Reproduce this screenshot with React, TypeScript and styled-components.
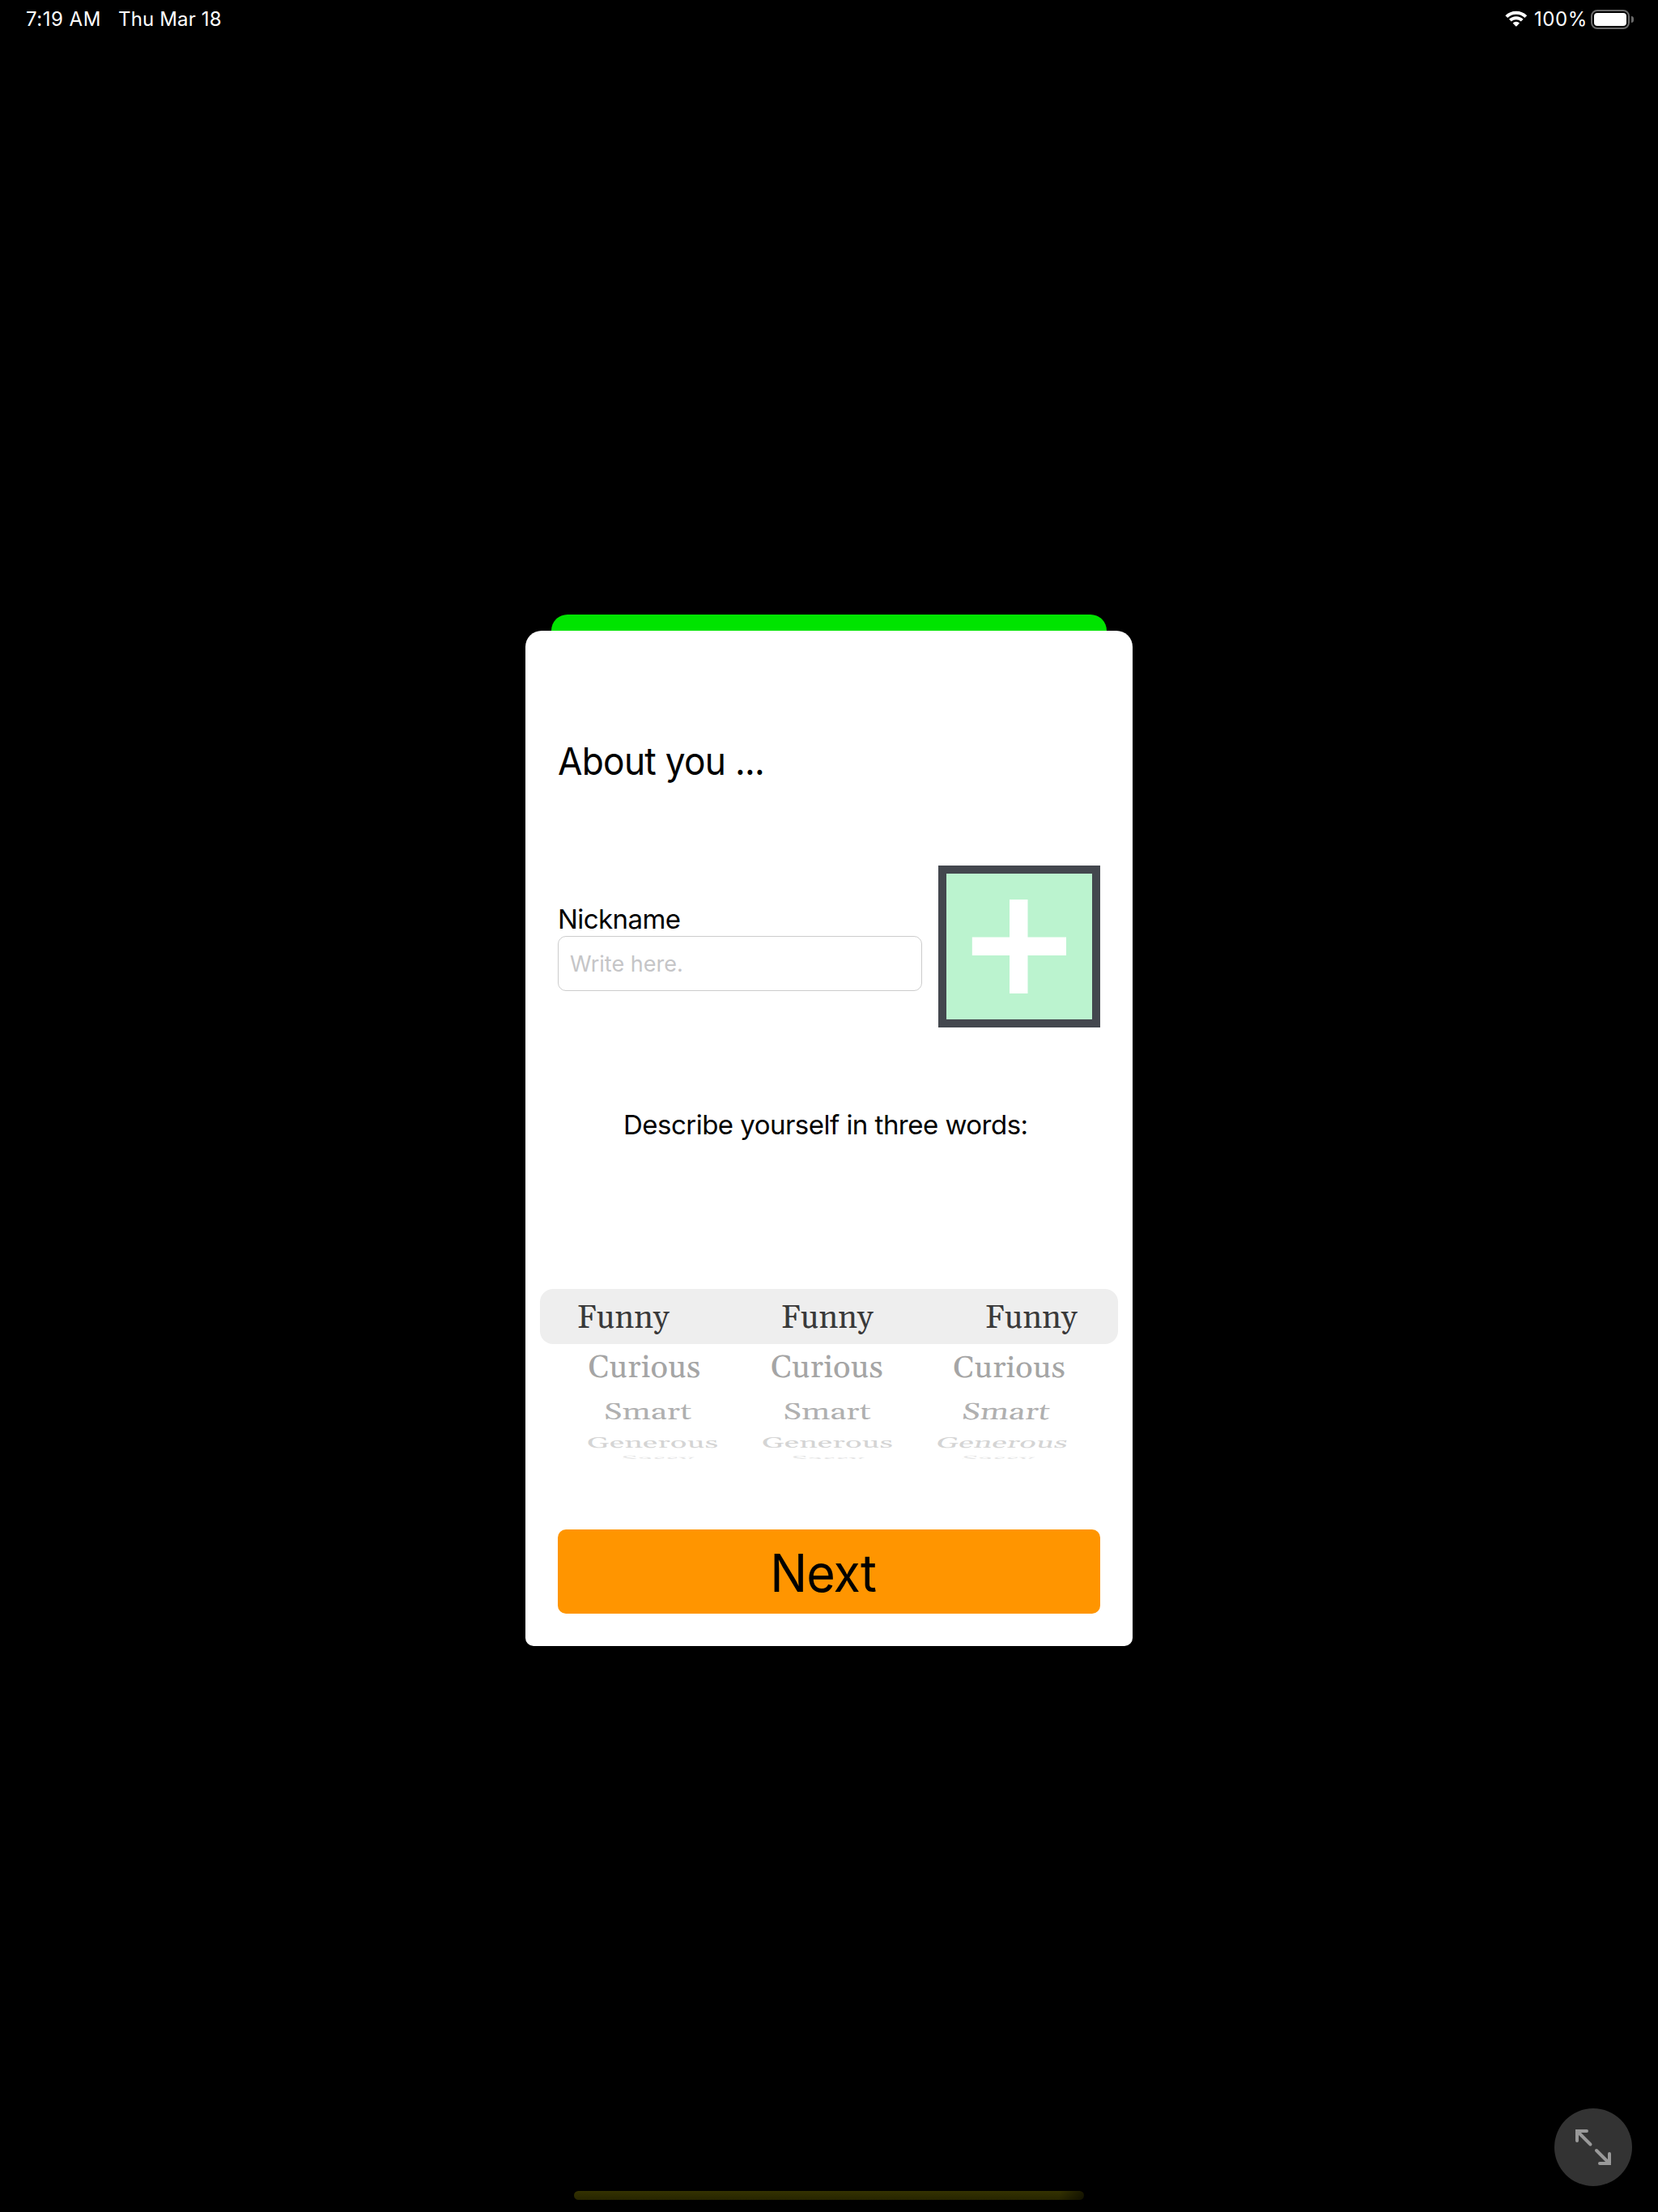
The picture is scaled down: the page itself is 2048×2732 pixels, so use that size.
import React from "react";
import styled, { createGlobalStyle } from "styled-components";

const GlobalStyle = createGlobalStyle`
  html, body, #root { margin: 0; padding: 0; background: #000; }
  * { box-sizing: border-box; }
`;

const Screen = styled.div`
  position: relative;
  display: flex;
  flex-direction: column;
  align-items: center;
  width: 2048px;
  height: 2732px;
  overflow: hidden;
  background: #000;
  color: #000;
  font-family: Inter, "Liberation Sans", sans-serif;
  white-space: nowrap;
`;

const StatusBar = styled.header`
  display: flex;
  align-items: center;
  align-self: stretch;
  height: 47px;
  padding: 0 30px 0 32px;
  color: #fff;
  font-size: 24px;
  line-height: 47px;
`;

const Clock = styled.span`
  width: 114px;
  letter-spacing: 0.5px;
`;

const DateLabel = styled.span`
  letter-spacing: 0.15px;
`;

const StatusIcons = styled.div`
  display: flex;
  align-items: center;
  margin-left: auto;
`;

const WifiIcon = styled.svg`
  width: 28px;
  height: 21px;
  margin-right: 8px;
`;

const BatteryLevel = styled.span`
  letter-spacing: 0.6px;
  margin-right: 4px;
`;

const BatteryBody = styled.div`
  width: 48px;
  height: 24px;
  padding: 2px;
  border: 2px solid #6a6a6a;
  border-radius: 8px;
`;

const BatteryFill = styled.div`
  height: 100%;
  border-radius: 4px;
  background: #fff;
`;

const BatteryNub = styled.div`
  width: 3px;
  height: 8px;
  margin-left: 2px;
  border-radius: 0 4px 4px 0;
  background: #6a6a6a;
`;

const BackCard = styled.div`
  width: 686px;
  height: 20px;
  margin-top: 712px;
  border-radius: 20px 20px 0 0;
  background: #00e400;
`;

const Card = styled.main`
  display: flex;
  flex-direction: column;
  width: 750px;
  height: 1254px;
  padding: 133px 40px 40px;
  border-radius: 20px 20px 10px 10px;
  background: #fff;
`;

const Title = styled.h1`
  margin: 0;
  font-size: 47px;
  font-weight: 400;
  line-height: 56px;
  letter-spacing: -0.75px;
  transform: scaleX(0.94);
  transform-origin: left;
`;

const ProfileRow = styled.section`
  display: flex;
  align-items: center;
  justify-content: space-between;
  margin-top: 101px;
`;

const Field = styled.div`
  display: flex;
  flex-direction: column;
  gap: 1px;
  width: 450px;
`;

const FieldLabel = styled.div`
  font-size: 33px;
  line-height: 40px;
  letter-spacing: -0.57px;
`;

const TextBox = styled.div`
  height: 68px;
  padding: 1px 14px 0;
  border: 1px solid #cccccc;
  border-radius: 10px;
  color: #c5c5c7;
  font-size: 27px;
  line-height: 66px;
`;

const AddPhoto = styled.div`
  display: grid;
  place-items: center;
  width: 200px;
  height: 200px;
  border: 10px solid #43474e;
  background: #bbf3cf;
`;

const PlusIcon = styled.svg`
  width: 118px;
  height: 118px;
`;

const Prompt = styled.p`
  margin: 100px 0 0 81px;
  font-size: 33px;
  line-height: 41px;
  letter-spacing: -0.52px;
`;

const Wheel = styled.section`
  display: flex;
  flex-direction: column;
  height: 212px;
  margin: 182px -22px 0;
  font-family: Gelasio, Georgia, "Liberation Serif", serif;
  font-size: 40px;
`;

const WheelRow = styled.div<{ $height: number; $pitch: number; $color: string; $selected?: boolean; $clipped?: boolean }>`
  display: grid;
  grid-template-columns: repeat(3, ${(p) => p.$pitch}px);
  justify-content: center;
  align-items: ${(p) => (p.$clipped ? "start" : "center")};
  flex: none;
  height: ${(p) => p.$height}px;
  margin-top: ${(p) => (p.$clipped ? "-2px" : "0")};
  padding-right: 5px;
  border-radius: ${(p) => (p.$selected ? "16px" : "0")};
  background: ${(p) => (p.$selected ? "#eeeeee" : "transparent")};
  color: ${(p) => p.$color};
  overflow: ${(p) => (p.$clipped ? "hidden" : "visible")};
`;

const Word = styled.span<{ $sx: number; $sy: number; $skew: number }>`
  padding-top: 4px;
  line-height: 15px;
  text-align: center;
  transform: skewX(${(p) => p.$skew}deg) scale(${(p) => p.$sx}, ${(p) => p.$sy});
`;

const NextButton = styled.button`
  height: 104px;
  margin: 85px 0 0;
  padding: 3px 15px 0 0;
  border: 0;
  border-radius: 10px;
  background: #ff9500;
  color: #000;
  font-family: inherit;
  font-size: 64px;
  line-height: 101px;
  letter-spacing: -1px;
`;

const NextLabel = styled.span`
  display: inline-block;
  transform: scaleX(0.953);
`;

const ResizeButton = styled.div`
  position: absolute;
  right: 32px;
  bottom: 32px;
  width: 96px;
  height: 96px;
  border-radius: 50%;
  background: #333;
`;

const HomeIndicator = styled.div`
  width: 630px;
  height: 11px;
  margin: auto 0 15px;
  border-radius: 6px;
  background:
    linear-gradient(100deg, transparent 95%, rgba(0, 0, 0, 0.55) 100%),
    linear-gradient(#343200, #272500);
`;

const rows = [
  { word: "Funny", height: 68, pitch: 252, color: "#3a3a3a", sx: 1, sy: 1, skews: [0, 0, 0], selected: true },
  { word: "Curious", height: 57, pitch: 225.5, color: "#a5a5a5", sx: 1, sy: 0.93, skews: [0, 0, -1] },
  { word: "Smart", height: 52, pitch: 221.5, color: "#b0b0b0", sx: 1, sy: 0.72, skews: [0, 0, -8] },
  { word: "Generous", height: 25, pitch: 216, color: "#d4d4d4", sx: 0.955, sy: 0.46, skews: [2, 0, -16] },
  { word: "Sassy", height: 10, pitch: 210, color: "#e6e6e6", sx: 0.93, sy: 0.22, skews: [4, 0, -24], clipped: true },
];

export default function App() {
  return (
    <>
      <GlobalStyle />
      <Screen>
        <StatusBar>
          <Clock>7:19 AM</Clock>
          <DateLabel>Thu Mar 18</DateLabel>
          <StatusIcons>
            <WifiIcon viewBox="0 0 28 21" fill="none" stroke="#fff" strokeWidth="4">
              <path d="M1.8 7.6 A17 17 0 0 1 25.8 7.6" />
              <path d="M6.4 12.2 A10.5 10.5 0 0 1 21.2 12.2" />
              <path d="M9.6 15.4 A6 6 0 0 1 18 15.4 L14.5 19.2 Q13.8 19.9 13.1 19.2 Z" fill="#fff" stroke="none" />
            </WifiIcon>
            <BatteryLevel>100%</BatteryLevel>
            <BatteryBody>
              <BatteryFill />
            </BatteryBody>
            <BatteryNub />
          </StatusIcons>
        </StatusBar>

        <BackCard />
        <Card>
          <Title>About you ...</Title>
          <ProfileRow>
            <Field>
              <FieldLabel>Nickname</FieldLabel>
              <TextBox>Write here.</TextBox>
            </Field>
            <AddPhoto>
              <PlusIcon viewBox="0 0 118 118">
                <path d="M47 1h22.500v46.500H117v22.500H69.500V117H47V70H0.800V47.500H47z" fill="#fff" />
              </PlusIcon>
            </AddPhoto>
          </ProfileRow>
          <Prompt>Describe yourself in three words:</Prompt>
          <Wheel>
            {rows.map((row) => (
              <WheelRow
                key={row.word}
                $height={row.height}
                $pitch={row.pitch}
                $color={row.color}
                $selected={row.selected}
                $clipped={row.clipped}
              >
                {row.skews.map((skew, i) => (
                  <Word key={i} $sx={row.sx} $sy={row.sy} $skew={skew}>
                    {row.word}
                  </Word>
                ))}
              </WheelRow>
            ))}
          </Wheel>
          <NextButton>
            <NextLabel>Next</NextLabel>
          </NextButton>
        </Card>

        <HomeIndicator />
        <ResizeButton>
          <svg width="96" height="96" viewBox="0 0 96 96" fill="none" stroke="#999" strokeWidth="4" strokeLinecap="round">
            <path d="M28 40V28H40M28 28L44.500 44.500M52 52L68 68M56 68H68V56" strokeLinejoin="miter" />
          </svg>
        </ResizeButton>
      </Screen>
    </>
  );
}
